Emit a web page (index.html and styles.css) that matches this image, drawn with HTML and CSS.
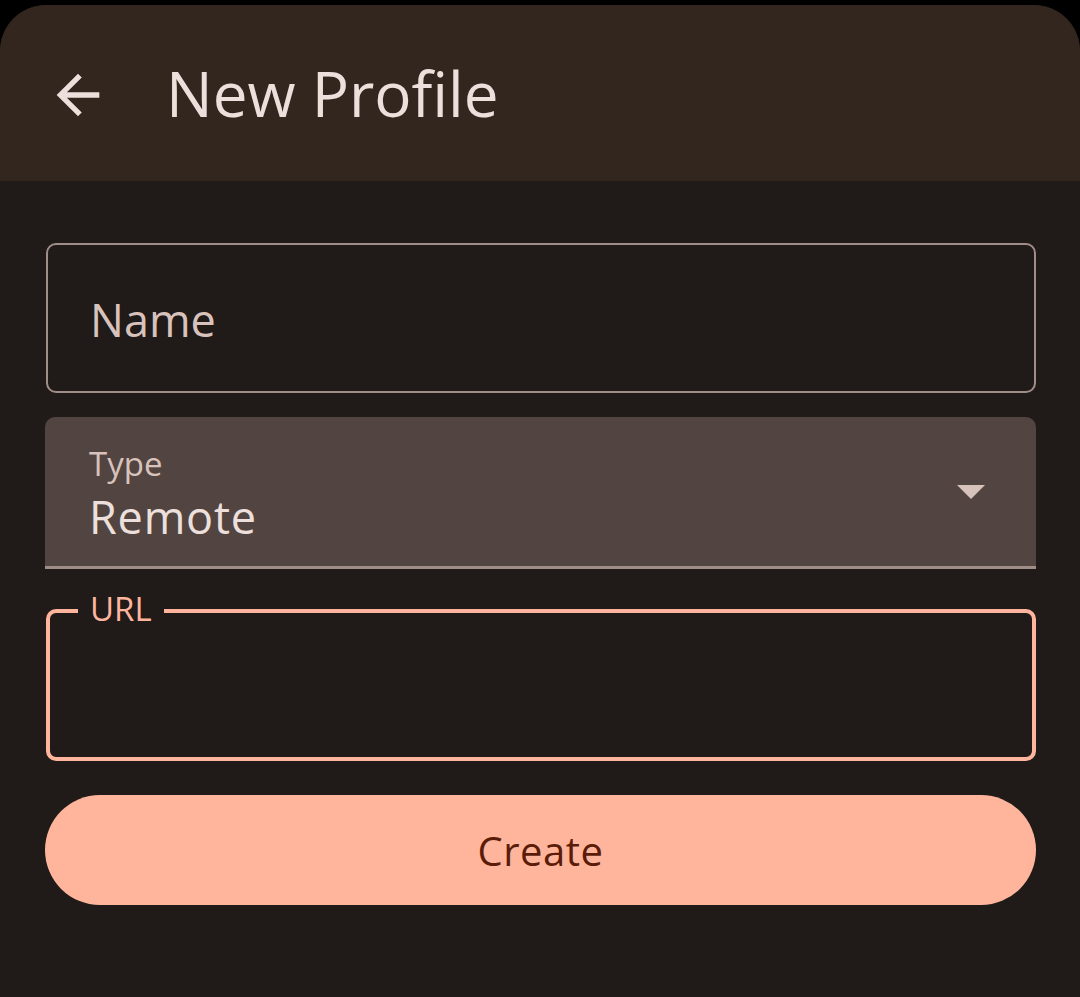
FILE: index.html
```html
<!DOCTYPE html>
<html lang="en">
<head>
<meta charset="utf-8">
<title>New Profile</title>
<link rel="stylesheet" href="styles.css">
</head>
<body>
<div class="screen">
  <header class="topbar">
    <button class="back" aria-label="Back">
      <svg viewBox="0 0 24 24" width="64" height="64"><path fill="currentColor" d="M20 11H7.83l5.59-5.59L12 4l-8 8 8 8 1.41-1.41L7.83 13H20v-2z"/></svg>
    </button>
    <h1 class="title">New Profile</h1>
  </header>
  <main class="form">
    <div class="field outlined">
      <span class="placeholder">Name</span>
    </div>
    <div class="field filled">
      <div class="filled-text">
        <span class="small-label">Type</span>
        <span class="value">Remote</span>
      </div>
      <svg class="caret" viewBox="0 0 28 14" width="28" height="14"><path fill="currentColor" d="M0 0h28L14 14z"/></svg>
    </div>
    <div class="field focused">
      <span class="float-label">URL</span>
    </div>
    <button class="create">Create</button>
  </main>
</div>
</body>
</html>
```
FILE: styles.css
```css
* { box-sizing: border-box; }
html, body { margin: 0; height: 100%; }
body {
  background: #000;
  font-family: "Open Sans", "Noto Sans", sans-serif;
  padding-top: 5px;
}
.screen {
  height: 992px;
  background: #201a18;
  border-radius: 46px 46px 0 0;
  overflow: hidden;
  display: flex;
  flex-direction: column;
}
.topbar {
  height: 176px;
  background: #32261f;
  display: flex;
  align-items: center;
  padding-left: 46px;
  flex-shrink: 0;
}
.back {
  width: 64px;
  height: 64px;
  padding: 0;
  border: 0;
  background: none;
  color: #ede0dc;
  display: flex;
  margin-top: 4px;
}
.title {
  margin: 0 0 0 56px;
  font-weight: 400;
  font-size: 62px;
  color: #ede0dc;
  letter-spacing: 0;
}
.form {
  padding: 62px 44px 0 45px;
  display: flex;
  flex-direction: column;
}
.field {
  height: 150px;
  border-radius: 10px;
  display: flex;
  align-items: center;
  padding-left: 42px;
}
.outlined {
  border: 2px solid #a08d87;
  margin-left: 1px;
}
.placeholder {
  font-size: 45px;
  color: #d8c2bc;
  margin-top: 2px;
}
.filled {
  margin-top: 24px;
  height: 152px;
  background: #524440;
  border-radius: 10px 10px 0 0;
  border-bottom: 3px solid #a08d87;
  justify-content: space-between;
  padding-left: 44px;
  padding-right: 51px;
}
.filled-text {
  display: flex;
  flex-direction: column;
  margin-top: 4px;
}
.small-label {
  font-size: 33px;
  line-height: normal;
  color: #d8c2bc;
}
.value {
  font-size: 45px;
  line-height: normal;
  letter-spacing: 0.8px;
  color: #ede0dc;
}
.caret {
  color: #d8c2bc;
}
.focused {
  position: relative;
  margin-top: 40px;
  margin-left: 1px;
  height: 152px;
  border: 4px solid #ffb59d;
}
.float-label {
  position: absolute;
  top: -26px;
  left: 28px;
  padding: 0 12px;
  background: #201a18;
  font-size: 33px;
  line-height: 44px;
  color: #ffb59d;
}
.create {
  margin-top: 34px;
  height: 110px;
  border: 0;
  border-radius: 55px;
  background: #ffb59c;
  color: #5a1c08;
  font-family: inherit;
  font-size: 40px;
  font-weight: 500;
  letter-spacing: 0.5px;
  padding: 0;
}
```
